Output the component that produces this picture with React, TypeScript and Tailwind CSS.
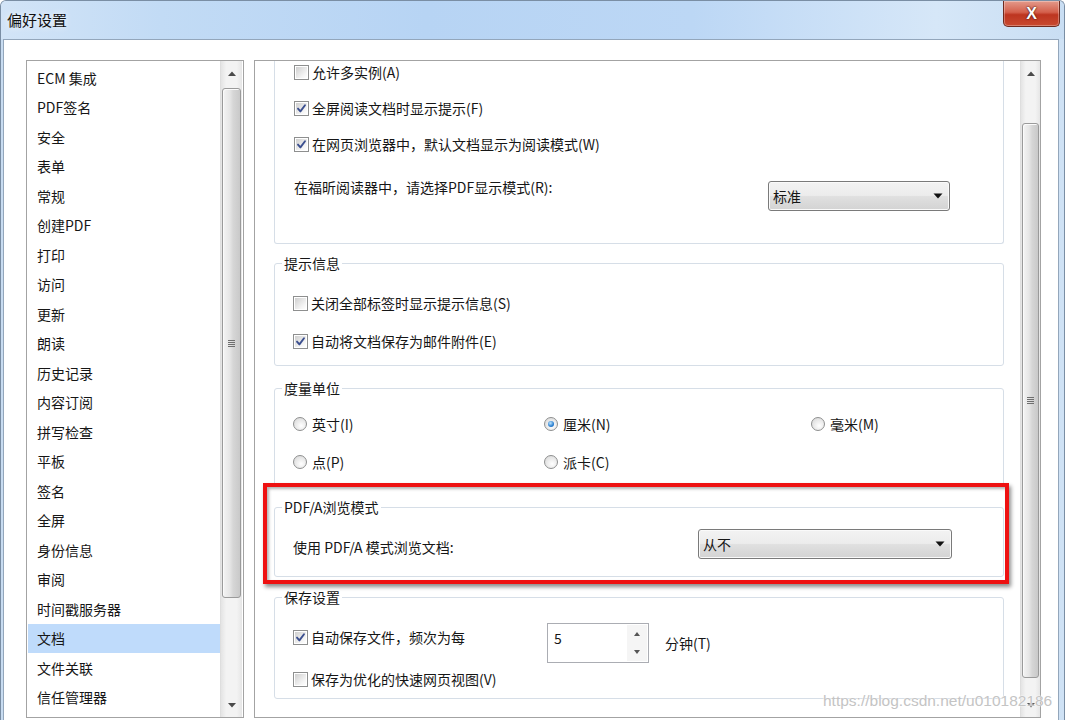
import React from 'react';

const items = [
  'ECM 集成', 'PDF签名', '安全', '表单', '常规', '创建PDF', '打印', '访问', '更新', '朗读',
  '历史记录', '内容订阅', '拼写检查', '平板', '签名', '全屏', '身份信息', '审阅', '时间戳服务器',
  '文档', '文件关联', '信任管理器',
];

function Tri({ up }: { up?: boolean }) {
  return (
    <svg width="8" height="5" viewBox="0 0 8 5">
      {up ? <path d="M0 5 L4 0.5 L8 5 Z" fill="#4a4a4a" /> : <path d="M0 0 L4 4.5 L8 0 Z" fill="#4a4a4a" />}
    </svg>
  );
}

function SelTri() {
  return (
    <svg width="10" height="6" viewBox="0 0 10 6">
      <path d="M0.5 0.5 L9.5 0.5 L5 5.5 Z" fill="#111" />
    </svg>
  );
}

function Grip() {
  return (
    <div className="flex flex-col gap-[1px]">
      <div className="w-[7px] h-[1px] bg-[#6e6e6e]" />
      <div className="w-[7px] h-[1px] bg-[#6e6e6e]" />
      <div className="w-[7px] h-[1px] bg-[#6e6e6e]" />
      <div className="w-[7px] h-[1px] bg-[#6e6e6e]" />
    </div>
  );
}

function VScroll({ spacer, thumb, width }: { spacer: string; thumb: string; width: string }) {
  return (
    <div className={`${width} flex flex-col bg-[linear-gradient(90deg,#e4e4e4,#f3f3f3_25%,#f3f3f3_75%,#e6e6e6)] border-l border-[#dedede]`}>
      <div className="h-[24px] flex items-center justify-center">
        <Tri up />
      </div>
      <div className={spacer} />
      <div
        className={`${thumb} mx-[1px] rounded-[3px] border border-[#9a9a9a] bg-[linear-gradient(90deg,#f4f4f4,#e6e6e6_40%,#d6d6d6_60%,#c9c9c9)] flex items-center justify-center shadow-[inset_1px_1px_0_#fbfbfb]`}
      >
        <Grip />
      </div>
      <div className="flex-1" />
      <div className="h-[24px] flex items-center justify-center">
        <Tri />
      </div>
    </div>
  );
}

function Check({ checked }: { checked?: boolean }) {
  return (
    <span className="w-[15px] h-[15px] shrink-0 border border-[#8e8f8f] bg-white p-[1px] flex">
      <span className="flex-1 flex items-center justify-center bg-[linear-gradient(135deg,#cfcfcf,#f4f4f4_70%,#ffffff)]">
        {checked && (
          <svg width="11" height="11" viewBox="0 0 11 11">
            <path d="M2 5.6 L4.4 8.4 L9 2.2" fill="none" stroke="#3b4f8f" strokeWidth="1.9" strokeLinecap="round" strokeLinejoin="round" />
          </svg>
        )}
      </span>
    </span>
  );
}

function Radio({ checked }: { checked?: boolean }) {
  return (
    <span className="w-[14px] h-[14px] shrink-0 rounded-full border border-[#8e8f8f] bg-[radial-gradient(circle_at_60%_65%,#ffffff,#d4d4d4)] flex items-center justify-center">
      {checked && (
        <span className="w-[6px] h-[6px] rounded-full bg-[radial-gradient(circle_at_40%_35%,#bfe6ff,#2a7fd0_60%,#1a5ea8)]" />
      )}
    </span>
  );
}

function CheckRow({ checked, label }: { checked?: boolean; label: string }) {
  return (
    <div className="h-[22px] flex items-center gap-[3px]">
      <Check checked={checked} />
      <span className="whitespace-nowrap">{label}</span>
    </div>
  );
}

function RadioItem({ checked, label }: { checked?: boolean; label: string }) {
  return (
    <div className="h-[22px] flex items-center gap-[5px]">
      <Radio checked={checked} />
      <span className="whitespace-nowrap">{label}</span>
    </div>
  );
}

function Combo({ value, className }: { value: string; className: string }) {
  return (
    <div
      className={`${className} h-[30px] shrink-0 rounded-[3px] border border-[#7a7a7a] bg-[linear-gradient(#f3f3f3_0%,#ececec_48%,#e0e0e0_52%,#d3d3d3_100%)] shadow-[inset_0_0_0_1px_#fafafa] flex items-center justify-between pl-[4px] pr-[6px]`}
    >
      <span>{value}</span>
      <SelTri />
    </div>
  );
}

export default function App() {
  return (
    <div className="relative w-[1065px] h-[720px] overflow-hidden flex flex-col rounded-t-[6px] border-t border-x border-[#7a8ea4] bg-[linear-gradient(90deg,#c8dcf1,#bcd6f2_40%,#c4dbf3_80%,#cfe2f5)] font-['Noto_Sans_CJK_SC',sans-serif] text-[14px] leading-[20px] text-[#161616]">
      {/* title bar */}
      <div className="h-[38px] shrink-0 flex items-start bg-[linear-gradient(90deg,#d2e4f7_0%,#c2dbf5_15%,#b7d4f4_40%,#bcd7f5_65%,#d6e7f8_88%,#c9def3_100%)]">
        <div className="pl-[6px] h-[38px] flex items-center text-[15px] text-[#111] [text-shadow:0_0_6px_#ffffff]">
          偏好设置
        </div>
        <div className="flex-1" />
        <div className="mr-[4px] w-[57px] h-[26px] rounded-b-[5px] border border-t-0 border-[#6e2a1f] bg-[linear-gradient(#e39a8b_0%,#d4604c_45%,#bd3520_55%,#c94a30_100%)] shadow-[inset_0_0_0_1px_rgba(255,255,255,0.3)] flex items-center justify-center">
          <span className="font-['Liberation_Sans',sans-serif] font-bold text-[16px] leading-none text-white [text-shadow:0_0_2px_#4a140c,0_0_1px_#4a140c]">
            X
          </span>
        </div>
      </div>

      {/* client area */}
      <div className="flex-1 ml-[2px] mr-[5px] border-t border-x border-[#93a6bb] bg-white flex gap-[10px] pl-[22px] pt-[20px]">
        {/* left list */}
        <div className="w-[218px] h-[658px] shrink-0 border border-[#a3a3a3] flex overflow-hidden">
          <div className="flex-1 flex flex-col pt-[2px]">
            {items.map((t) => (
              <div
                key={t}
                className={`h-[29.5px] shrink-0 ml-[1px] pl-[9px] flex items-center whitespace-nowrap ${
                  t === '文档' ? 'bg-[#bfdbfb]' : ''
                }`}
              >
                {t}
              </div>
            ))}
          </div>
          <div className="mr-[1px] flex">
            <VScroll width="w-[22px]" spacer="h-[3px]" thumb="h-[510px]" />
          </div>
        </div>

        {/* right panel */}
        <div className="w-[787px] h-[658px] shrink-0 border border-[#a3a3a3] flex overflow-hidden">
          <div className="flex-1 flex flex-col pl-[19px] pr-[16px]">
            {/* group 1 (scrolled, top cut off) */}
            <div className="border-x border-b border-[#d6dee7] rounded-b-[3px] pl-[19px] pr-[53px] pb-[32px] flex flex-col">
              <CheckRow label="允许多实例(A)" />
              <div className="mt-[14px]">
                <CheckRow checked label="全屏阅读文档时显示提示(F)" />
              </div>
              <div className="mt-[14px]">
                <CheckRow checked label="在网页浏览器中，默认文档显示为阅读模式(W)" />
              </div>
              <div className="mt-[22px] h-[34px] flex items-start">
                <span className="whitespace-nowrap">在福昕阅读器中，请选择PDF显示模式(R):</span>
                <div className="flex-1" />
                <div className="mt-[4px] flex">
                  <Combo value="标准" className="w-[182px]" />
                </div>
              </div>
            </div>

            {/* group 2 */}
            <fieldset className="mt-[9px] border border-[#d6dee7] rounded-[3px]">
              <legend className="ml-[7px] px-[2px] leading-[20px]">提示信息</legend>
              <div className="pl-[18px] pt-[19px] pb-[13px] flex flex-col gap-[16px]">
                <CheckRow label="关闭全部标签时显示提示信息(S)" />
                <CheckRow checked label="自动将文档保存为邮件附件(E)" />
              </div>
            </fieldset>

            {/* group 3 */}
            <fieldset className="mt-[12px] border border-[#d6dee7] rounded-[3px]">
              <legend className="ml-[7px] px-[2px] leading-[20px]">度量单位</legend>
              <div className="pl-[18px] pt-[15px] pb-[12px] grid grid-cols-[251px_267px_1fr] gap-y-[16px]">
                <RadioItem label="英寸(I)" />
                <RadioItem checked label="厘米(N)" />
                <RadioItem label="毫米(M)" />
                <RadioItem label="点(P)" />
                <RadioItem label="派卡(C)" />
              </div>
            </fieldset>

            {/* group 4 with red annotation */}
            <div className="relative mt-[11px]">
              <fieldset className="border border-[#d6dee7] rounded-[3px]">
                <legend className="ml-[7px] px-[2px] leading-[20px]">PDF/A浏览模式</legend>
                <div className="pl-[18px] pr-[51px] pt-[12px] pb-[17px] flex items-start">
                  <span className="mt-[8px] whitespace-nowrap">使用 PDF/A 模式浏览文档:</span>
                  <div className="flex-1" />
                  <Combo value="从不" className="w-[254px]" />
                </div>
              </fieldset>
              <div className="absolute left-[-11px] top-[-14px] right-[-5px] bottom-[-7px] border-[4px] border-[#ee1111] shadow-[2px_3px_4px_rgba(0,0,0,0.45),inset_2px_2px_3px_rgba(0,0,0,0.3)] pointer-events-none" />
            </div>

            {/* group 5 */}
            <fieldset className="mt-[10px] border border-[#d6dee7] rounded-[3px]">
              <legend className="ml-[7px] px-[2px] leading-[20px]">保存设置</legend>
              <div className="pl-[18px] pt-[16px] pb-[8px] flex flex-col">
                <div className="h-[40px] flex items-start">
                  <div className="w-[254px] mt-[3px]">
                    <CheckRow checked label="自动保存文件，频次为每" />
                  </div>
                  <div className="w-[102px] h-[40px] border border-[#abadb3] bg-white flex">
                    <div className="flex-1 pl-[6px] pt-[4px]">5</div>
                    <div className="w-[20px] mr-[1px] my-[1px] flex flex-col bg-[#f5f5f5]">
                      <div className="flex-1 flex items-center justify-center">
                        <svg width="6" height="4" viewBox="0 0 6 4">
                          <path d="M0 4 L3 0 L6 4 Z" fill="#555" />
                        </svg>
                      </div>
                      <div className="flex-1 flex items-center justify-center">
                        <svg width="6" height="4" viewBox="0 0 6 4">
                          <path d="M0 0 L3 4 L6 0 Z" fill="#555" />
                        </svg>
                      </div>
                    </div>
                  </div>
                  <span className="ml-[16px] self-center whitespace-nowrap">分钟(T)</span>
                </div>
                <div className="mt-[5px]">
                  <CheckRow label="保存为优化的快速网页视图(V)" />
                </div>
              </div>
            </fieldset>
          </div>
          <VScroll width="w-[20px]" spacer="h-[38px]" thumb="h-[555px]" />
        </div>
      </div>

      {/* watermark */}
      <div className="absolute left-[822px] top-[689px] font-['Liberation_Sans',sans-serif] text-[15.5px] leading-[22px] text-[#c4c4c4] [text-shadow:0_0_2px_#ffffff,0_0_1px_#ffffff] whitespace-nowrap pointer-events-none">
        https://blog.csdn.net/u010182186
      </div>
    </div>
  );
}
